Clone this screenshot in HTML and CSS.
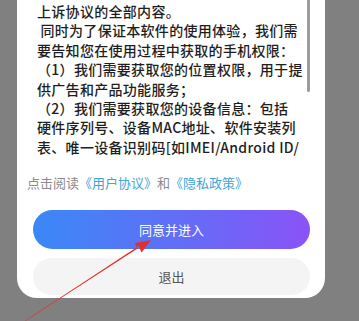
FILE: index.html
```html
<!DOCTYPE html>
<html lang="zh-CN">
<head>
<meta charset="utf-8">
<link rel="stylesheet" href="styles.css">
</head>
<body>
<div class="screen">
  <div class="card">
    <div class="content">
      <div class="line">上诉协议的全部内容。</div>
      <div class="line">&nbsp;同时为了保证本软件的使用体验，我们需</div>
      <div class="line">要告知您在使用过程中获取的手机权限：</div>
      <div class="line">（1）我们需要获取您的位置权限，用于提</div>
      <div class="line">供广告和产品功能服务；</div>
      <div class="line">（2）我们需要获取您的设备信息：包括</div>
      <div class="line">硬件序列号、设备MAC地址、软件安装列</div>
      <div class="line">表、唯一设备识别码[如IMEI/Android ID/</div>
    </div>
    <div class="agree">点击阅读<a class="link">《用户协议》</a>和<a class="link">《隐私政策》</a></div>
    <div class="btn btn-primary">同意并进入</div>
    <div class="btn btn-secondary">退出</div>
    <div class="scrollbar"></div>
  </div>
  <svg class="arrow" width="359" height="321" viewBox="0 0 359 321">
    <polygon points="24.6,321.6 25.4,320.4 138.6,245.9 141.6,252.6 151,240 134.8,243.0 137.6,248.4" fill="#e1312a"/>
  </svg>
</div>
</body>
</html>
```
FILE: styles.css
```css
html, body {
  margin: 0;
  padding: 0;
}
body {
  background: #808080;
  font-family: "Noto Sans CJK SC", "Noto Sans", sans-serif;
}
.screen {
  position: relative;
  width: 359px;
  height: 321px;
  overflow: hidden;
}
.card {
  position: relative;
  margin-left: 17px;
  width: 308px;
  background: #fff;
  border-radius: 0 0 20px 20px;
  padding: 2px 0 3px;
  box-sizing: border-box;
}
.content {
  padding: 0 20px;
}
.line {
  font-size: 14px;
  letter-spacing: 0.3px;
  line-height: 19.4px;
  color: #1e1e1e;
  font-weight: 500;
  white-space: nowrap;
}
.agree {
  margin-top: 16px;
  padding-left: 10px;
  font-size: 13px;
  line-height: 20px;
  color: #8a8a8a;
  white-space: nowrap;
}
.link {
  color: #3fa5d8;
}
.btn {
  margin: 0 15px 0 16px;
  border-radius: 20px;
  display: flex;
  align-items: center;
  justify-content: center;
  font-size: 13px;
}
.btn-primary {
  margin-top: 17px;
  height: 39px;
  background: linear-gradient(90deg, #3a88f6 0%, #5f6ff7 50%, #8b53f7 100%);
  color: #fff;
}
.btn-secondary {
  margin-top: 9px;
  height: 37px;
  background: #f4f4f4;
  color: #555;
}
.scrollbar {
  position: absolute;
  top: 0;
  left: 290px;
  width: 3px;
  height: 92px;
  background: #9c9c9c;
  border-radius: 0 0 2px 2px;
}
.arrow {
  position: absolute;
  left: 0;
  top: 0;
  pointer-events: none;
}
```
